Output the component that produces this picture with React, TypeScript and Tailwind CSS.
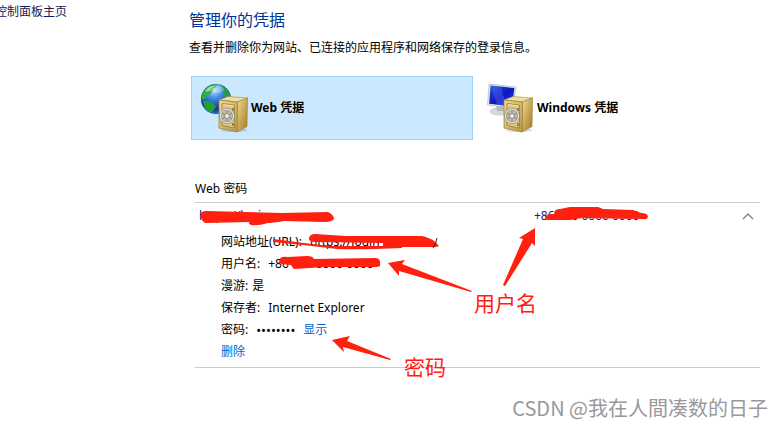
import { useState } from "react";

function SafeBody() {
  return (
    <>
      <ellipse cx="34" cy="47" rx="13" ry="2" fill="#000" opacity="0.15" />
      <path d="M19 17 L28 13.5 L47.5 15 L37.5 19 Z" fill="#f0dfa0" stroke="#a8873a" strokeWidth="0.6" />
      <path d="M37.5 19 L47.5 15 L47 43.5 L37 49 Z" fill="url(#safeSide)" stroke="#9a7a2c" strokeWidth="0.6" />
      <path d="M19 17 L37.5 19 L37 49 L19 45 Z" fill="url(#safeFront)" stroke="#9a7a2c" strokeWidth="0.7" />
      <path d="M22 20.5 L34.5 22 L34.5 45 L22 42.5 Z" fill="#dcc67f" stroke="#9b7d35" strokeWidth="0.8" />
      <path d="M23 21.7 L33.5 23" stroke="#f7ecc0" strokeWidth="0.8" />
      <path d="M33 25 V28 M33 40 V43" stroke="#6e5620" strokeWidth="1.2" />
      <circle cx="27" cy="33" r="6.6" fill="#c9bd94" stroke="#7d7d7d" strokeWidth="2.4" />
      <circle cx="27" cy="33" r="6.6" fill="none" stroke="#dfe2e6" strokeWidth="1.4" />
      <path d="M27 27 V39 M21.8 30 L32.2 36 M21.8 36 L32.2 30" stroke="#8b8f95" strokeWidth="1.1" />
      <circle cx="27" cy="33" r="2.4" fill="#eceef0" stroke="#777" strokeWidth="0.7" />
    </>
  );
}

function WebIcon() {
  return (
    <svg width="50" height="50" viewBox="0 0 50 50" className="shrink-0" aria-hidden="true">
      <defs>
        <radialGradient id="globe" cx="0.45" cy="0.2" r="0.85">
          <stop offset="0" stopColor="#a9e2ff" />
          <stop offset="0.35" stopColor="#3a86e0" />
          <stop offset="0.75" stopColor="#10349c" />
          <stop offset="1" stopColor="#2b86d8" />
        </radialGradient>
        <linearGradient id="safeFront" x1="0" y1="0" x2="1" y2="1">
          <stop offset="0" stopColor="#efdc98" />
          <stop offset="1" stopColor="#b8974a" />
        </linearGradient>
        <linearGradient id="safeSide" x1="0" y1="0" x2="1" y2="1">
          <stop offset="0" stopColor="#f0df9c" />
          <stop offset="0.5" stopColor="#c9a855" />
          <stop offset="1" stopColor="#9c7a2c" />
        </linearGradient>
        <clipPath id="globeClip">
          <circle cx="16" cy="16" r="15" />
        </clipPath>
      </defs>
      <circle cx="16" cy="16" r="15" fill="url(#globe)" />
      <g clipPath="url(#globeClip)" fill="#23a036">
        <path d="M1 14 C2 7 7 2 14 1 L18 2 L15 5 L12 6 L13 8 L10 11 L7 12 L6 15 L3 17 Z" fill="#2fae40" />
        <path d="M3 18 L9 18 L14 21 L16 24 L13 28 L10 31 L5 27 Z" />
        <path d="M22 2 L27 5 L30 10 L31 17 L28 16 L24 12 L25 8 L21 6 Z" />
        <path d="M5 8 C8 4 11 3 15 3 L11 5 L8 9 Z" fill="#8bdc7d" />
      </g>
      <ellipse cx="16" cy="6" rx="8" ry="4" fill="#fff" opacity="0.28" />
      <circle cx="16" cy="16" r="14.7" fill="none" stroke="#1d5fb0" strokeWidth="0.7" opacity="0.7" />
      <SafeBody />
    </svg>
  );
}

function WindowsIcon() {
  return (
    <svg width="50" height="50" viewBox="0 0 50 50" className="shrink-0" aria-hidden="true">
      <defs>
        <linearGradient id="screen" x1="0" y1="0" x2="1" y2="1">
          <stop offset="0" stopColor="#2a50dc" />
          <stop offset="0.5" stopColor="#0d17c0" />
          <stop offset="1" stopColor="#2337d8" />
        </linearGradient>
      </defs>
      <ellipse cx="14" cy="28.5" rx="9" ry="3.7" fill="#d5d8dc" stroke="#b5b9be" strokeWidth="0.5" />
      <path d="M11 21 L20 22 L19 28 L12 28 Z" fill="#b4b9bf" />
      <path d="M4 1 L31 4 L28 25 L2.5 22 Z" fill="#e4e8ee" stroke="#a6acb8" strokeWidth="0.6" />
      <path d="M5.5 2.4 L29.4 5.1 L27 23.6 L4.2 20.8 Z" fill="url(#screen)" />
      <path d="M5.5 2.4 L16 3.6 L21 22.8 L12 21.7 Z" fill="#6f8cf5" opacity="0.3" />
      <SafeBody />
    </svg>
  );
}

// red marker strokes and arrows drawn over the panel
function Markup() {
  return (
    <svg
      width="782"
      height="428"
      viewBox="0 0 782 428"
      className="pointer-events-none absolute left-0 top-0"
      aria-hidden="true"
    >
      <g fill="#ff2010">
        <path d="M388 263 L405 260 L402 264 L472 291 L471 292 L399 271 L399 276 Z" />
        <path d="M535 228 L535 246 L532 243 L505 286 L503 285 L523 239 L519 238 Z" />
        <path d="M332 340 L350 336 L347 341 L391 359 L390 360 L343 347 L344 352 Z" />
      </g>
      <g fill="#ff2010">
        <path d="M201 213 Q202 211 206 211 L281 213 L328 212 Q334 215 334 219 Q332 222 325 222 L284 221 Q272 223 268 223 Q258 226 251 225 Q247 223 250 222 L205 223 Q200 220 201 213 Z" />
        <path d="M309 238 Q310 234 315 234 L346 236 L422 236 Q433 238 439 246 L436 247 L383 247 L383 243 L314 242 Q308 241 309 238 Z" />
        <path d="M273 239 L304 243 L330 246 L402 246 L402 248 Q360 250 337 249 L303 245 L273 242 Z" />
        <path d="M280 259 Q281 256 288 257 L307 256 Q313 256 314 259 L376 258 Q381 259 380 264 Q381 267 376 267 L326 267 L294 269 Q292 267 291 265 L281 264 Q278 262 280 259 Z" />
        <path d="M545 217 Q545 214 554 214 Q554 209 560 209 L570 207 L598 207 L603 209 L633 210 L641 213 Q648 213 648 217 Q647 220 643 219 L582 218 L570 220 L548 220 Q545 220 545 217 Z" />
      </g>
      <path d="M433 248 Q436 244 437 238" stroke="#222" strokeWidth="1" fill="none" />
    </svg>
  );
}

export default function App() {
  const [open, setOpen] = useState(true);

  return (
    <div className="relative flex min-h-screen overflow-hidden bg-white font-['Noto_Sans','Noto_Sans_CJK_SC',sans-serif] text-xs text-black">
      <aside className="w-[189px] shrink-0 pt-1">
        <a href="#home" className="-ml-[5px] whitespace-nowrap text-[#151c55]">
          控制面板主页
        </a>
      </aside>

      <main className="min-w-0 flex-1 pr-[22px] pt-2">
        <h1 className="text-base leading-6 text-[#003399]">管理你的凭据</h1>
        <p className="mt-2 leading-4">查看并删除你为网站、已连接的应用程序和网络保存的登录信息。</p>

        <div className="ml-0.5 mt-5 flex gap-1">
          <button
            type="button"
            className="flex h-16 w-[282px] items-center gap-px border border-[#99d1ff] bg-[#cce8ff] pl-2 text-left font-bold"
          >
            <WebIcon />
            Web 凭据
          </button>
          <button type="button" className="flex h-16 w-[282px] items-center gap-0.5 pl-2 text-left font-bold">
            <WindowsIcon />
            Windows 凭据
          </button>
        </div>

        <section className="ml-1.5 mt-10">
          <h2 className="leading-[18px]">Web 密码</h2>
          <div className="mt-1 border-y border-[#cccccc] pb-1">
            <button
              type="button"
              aria-expanded={open}
              onClick={() => setOpen(!open)}
              className="mb-0.5 flex h-[26px] w-full items-center text-left text-[#1a1a80]"
            >
              <span className="w-[335px] pl-1">https://login</span>
              <span className="flex-1 pl-1">+86 000 0000 0000</span>
              <svg width="12" height="8" viewBox="0 0 12 8" className="mr-1.5" aria-hidden="true">
                <path d="M1 7 L6 2 L11 7" fill="none" stroke="#777" strokeWidth="1.2" />
              </svg>
            </button>
            {open && (
              <div className="pl-[26px] leading-[22px]">
                <div className="flex gap-2">
                  <span>网站地址(URL):</span>
                  <span>https://login</span>
                </div>
                <div className="flex gap-2">
                  <span>用户名:</span>
                  <span>+86 000 0000 0000</span>
                </div>
                <div className="flex gap-1">
                  <span>漫游:</span>
                  <span>是</span>
                </div>
                <div className="flex gap-2">
                  <span>保存者:</span>
                  <span>Internet Explorer</span>
                </div>
                <div className="flex gap-2">
                  <span>密码:</span>
                  <span className="text-[13px]">••••••••</span>
                  <a href="#show" className="text-[#0066cc]">
                    显示
                  </a>
                </div>
                <a href="#delete" className="block text-[#0066cc]">
                  删除
                </a>
              </div>
            )}
          </div>
        </section>
      </main>

      <Markup />
      <span className="absolute left-[474px] top-[290px] font-['Noto_Sans_CJK_SC',sans-serif] text-[21px] leading-6 text-[#ff2010]">
        用户名
      </span>
      <span className="absolute left-[404px] top-[354px] font-['Noto_Sans_CJK_SC',sans-serif] text-[21px] leading-6 text-[#ff2010]">
        密码
      </span>
      <span className="absolute bottom-2 right-3.5 font-['Noto_Sans_CJK_SC',sans-serif] text-xl leading-6 text-[#999999]">
        CSDN @我在人間凑数的日子
      </span>
    </div>
  );
}
